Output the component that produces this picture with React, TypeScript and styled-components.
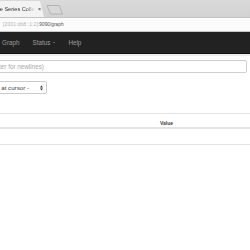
import React from "react";
import styled, { createGlobalStyle } from "styled-components";

const GlobalStyle = createGlobalStyle`
	html, body {
		margin: 0;
		padding: 0;
		background: #ffffff;
		overflow: hidden;
		font-family: "Liberation Sans", Arial, sans-serif;
	}
`;

const Window = styled.div`
	width: 250px;
	height: 250px;
	overflow: hidden;
	display: flex;
	flex-direction: column;
`;

/* browser chrome */
const TabStrip = styled.div`
	height: 17px;
	background: linear-gradient(#dadada, #d2d2d2);
	display: flex;
	align-items: flex-end;
	gap: 2px;
	flex-shrink: 0;
`;

const Tab = styled.div`
	margin-left: -45px;
	width: 89px;
	height: 16px;
	background: #f3f3f3;
	clip-path: polygon(0 0, 85px 0, 89px 16px, 0 16px);
	display: flex;
	align-items: center;
	padding-left: 4px;
	box-sizing: border-box;
	flex-shrink: 0;
`;

const TabTitle = styled.span`
	font-size: 5.6px;
	color: #333;
	white-space: nowrap;
	overflow: hidden;
	width: 76px;
	-webkit-mask-image: linear-gradient(90deg, #000 88%, transparent);
	mask-image: linear-gradient(90deg, #000 88%, transparent);
`;

const TabClose = styled.span`
	font-size: 5px;
	color: #555;
	margin-left: 3px;
	font-weight: bold;
`;

const NewTab = styled.svg`
	margin-bottom: 2px;
	flex-shrink: 0;
`;

const AddressBar = styled.div`
	height: 15px;
	background: #fbfbfb;
	border-top: 1px solid #c4c4c4;
	border-bottom: 1px solid #c8c8c8;
	display: flex;
	align-items: center;
	padding-left: 3px;
	box-sizing: border-box;
	flex-shrink: 0;
	white-space: nowrap;
`;

const Host = styled.span`
	font-size: 4.8px;
	color: #b0b0b0;
	letter-spacing: 0.2px;
`;

const Path = styled.span`
	font-size: 4.8px;
	color: #555;
`;

/* prometheus navbar */
const Navbar = styled.nav`
	height: 22px;
	background: #222222;
	border-bottom: 1px solid #101010;
	box-shadow: 0 2px 0 #ececec;
	display: flex;
	align-items: center;
	gap: 13px;
	padding-left: 2px;
	flex-shrink: 0;
	box-sizing: border-box;
`;

const NavItem = styled.span`
	font-size: 6.3px;
	color: #9d9d9d;
	display: flex;
	align-items: center;
	gap: 2px;
`;

const Caret = styled.span`
	display: inline-block;
	width: 0;
	height: 0;
	border-left: 1.5px solid transparent;
	border-right: 1.5px solid transparent;
	border-top: 1.6px solid #9d9d9d;
	margin-left: 1px;
`;

/* page */
const Content = styled.main`
	display: flex;
	flex-direction: column;
	padding-top: 6px;
`;

const Expression = styled.div`
	margin-left: -83px;
	width: 330px;
	height: 13px;
	border: 1px solid #cfcfcf;
	border-radius: 2px;
	box-sizing: border-box;
	display: flex;
	align-items: center;
	padding-left: 5px;
	font-size: 6.3px;
	color: #a8a8a8;
	white-space: nowrap;
`;

const Controls = styled.div`
	display: flex;
	margin-top: 8px;
`;

const MetricSelect = styled.div`
	margin-left: -44px;
	width: 91px;
	height: 13px;
	border: 1px solid #cccccc;
	border-radius: 2px;
	box-sizing: border-box;
	display: flex;
	align-items: center;
	justify-content: space-between;
	padding: 0 3px 0 5px;
	font-size: 6.2px;
	color: #444;
	white-space: nowrap;
`;

const TabsLine = styled.div`
	margin-top: 19px;
	border-bottom: 1px solid #e2e2e2;
`;

const Table = styled.div`
	margin-left: -70px;
	display: grid;
	grid-template-columns: 228px 1fr;
`;

const HeadCell = styled.div`
	height: 15px;
	border-bottom: 2px solid #e4e4e4;
	box-sizing: border-box;
	padding: 6px 0 0 2px;
	font-size: 5px;
	font-weight: bold;
	color: #444;
`;

const Cell = styled.div`
	height: 16px;
	border-bottom: 1px solid #e6e6e6;
	box-sizing: border-box;
`;

export default function App() {
	return (
		<>
			<GlobalStyle />
			<Window>
				<TabStrip>
					<Tab>
						<TabTitle>Prometheus Time Series Collection and Processing Server</TabTitle>
						<TabClose>×</TabClose>
					</Tab>
					<NewTab width="18" height="11" viewBox="0 0 18 11">
						<path d="M1 1.5 H13 L16.5 10 H4.5 Z" fill="#d8d8d8" stroke="#a9a9a9" strokeWidth="0.8" />
					</NewTab>
				</TabStrip>
				<AddressBar>
					<Host>[2001:db8::1:2]</Host>
					<Path>:9090/graph</Path>
				</AddressBar>
				<Navbar>
					<NavItem>Graph</NavItem>
					<NavItem>
						Status <Caret />
					</NavItem>
					<NavItem>Help</NavItem>
				</Navbar>
				<Content>
					<Expression>Expression (press Shift+Enter for newlines)</Expression>
					<Controls>
						<MetricSelect>
							<span>- insert metric at cursor -</span>
							<svg width="3" height="6" viewBox="0 0 3 6">
								<path d="M0 2.4 L1.5 0.6 L3 2.4 Z M0 3.6 L1.5 5.4 L3 3.6 Z" fill="#333" />
							</svg>
						</MetricSelect>
					</Controls>
					<TabsLine />
					<Table>
						<HeadCell>Element</HeadCell>
						<HeadCell>Value</HeadCell>
						<Cell />
						<Cell />
					</Table>
				</Content>
			</Window>
		</>
	);
}
